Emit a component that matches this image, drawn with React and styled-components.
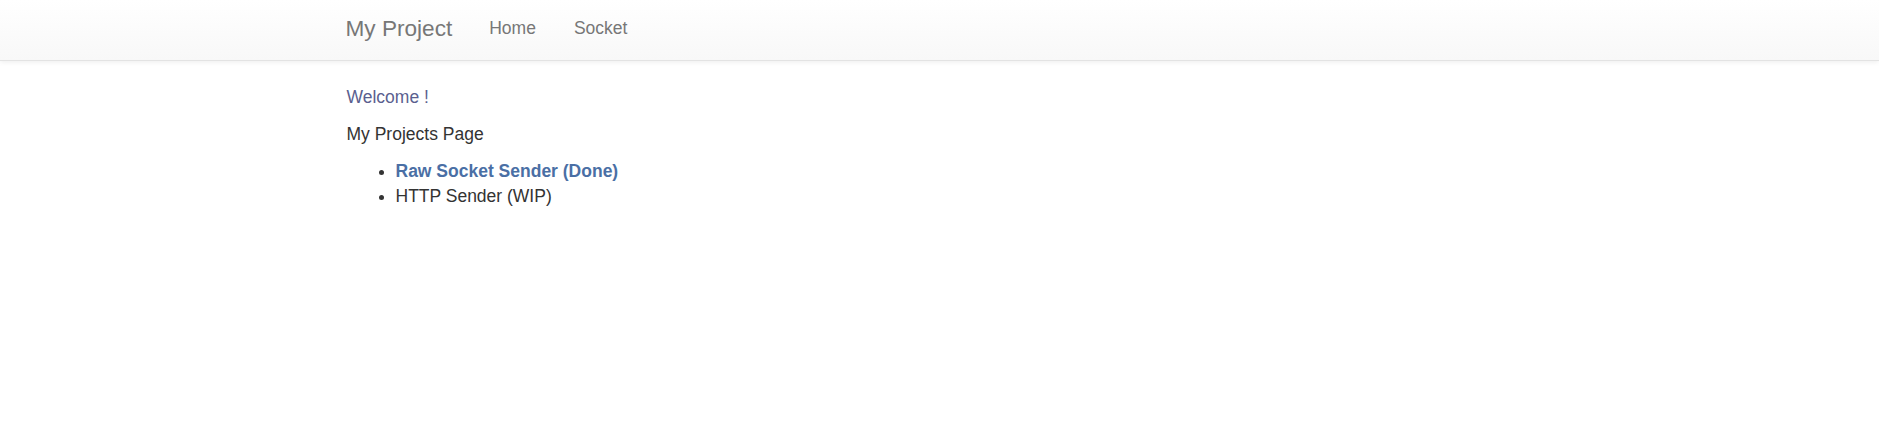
import React from 'react';
import styled, { createGlobalStyle } from 'styled-components';

const GlobalStyle = createGlobalStyle`
  body {
    margin: 0;
    background: #fff;
    font-family: "Liberation Sans", Arial, sans-serif;
    font-size: 17.5px;
    line-height: 24px;
    color: #333;
  }
`;

const Navbar = styled.nav`
  height: 60px;
  border-bottom: 1px solid #e3e3e3;
  background-image: linear-gradient(to bottom, #fff 0, #f8f8f8 100%);
  box-shadow: inset 0 1px 0 rgba(255, 255, 255, 0.15), 0 1px 5px rgba(0, 0, 0, 0.075);
  margin-bottom: 24px;
`;

const Container = styled.div`
  width: 1222px;
  margin: 0 auto;
  padding: 0 18px;
  box-sizing: border-box;
`;

const NavInner = styled(Container)`
  display: flex;
  align-items: flex-start;
`;

const Brand = styled.a`
  display: block;
  margin-left: -18px;
  padding: 17px 19px 0 17px;
  height: 60px;
  box-sizing: border-box;
  font-size: 22.6px;
  line-height: 24px;
  color: #777;
  text-decoration: none;
`;

const NavList = styled.ul`
  display: flex;
  list-style: none;
  margin: 0;
  padding: 0;
`;

const NavLink = styled.a`
  display: block;
  padding: 16px 20px 15px 18px;
  font-size: 17.5px;
  line-height: 24px;
  color: #777;
  text-decoration: none;
`;

const Text = styled.p`
  margin: 0 0 ${(p) => p.$gap || 12}px;
  color: ${(p) => p.$color || '#333'};
`;

const ProjectList = styled.ul`
  margin: 0;
  padding-left: 49px;
`;

const Item = styled.li`
  line-height: 25px;
`;

const ProjectLink = styled.a`
  color: #4a6fa5;
  font-weight: bold;
  text-decoration: none;
`;

export default function App() {
  return (
    <>
      <GlobalStyle />
      <Navbar>
        <NavInner>
          <Brand href="#">My Project</Brand>
          <NavList>
            <li><NavLink href="#">Home</NavLink></li>
            <li><NavLink href="#">Socket</NavLink></li>
          </NavList>
        </NavInner>
      </Navbar>
      <Container>
        <Text $color="#5b5f8f" $gap={13}>Welcome !</Text>
        <Text $gap={13}>My Projects Page</Text>
        <ProjectList>
          <Item><ProjectLink href="#">Raw Socket Sender (Done)</ProjectLink></Item>
          <Item>HTTP Sender (WIP)</Item>
        </ProjectList>
      </Container>
    </>
  );
}
